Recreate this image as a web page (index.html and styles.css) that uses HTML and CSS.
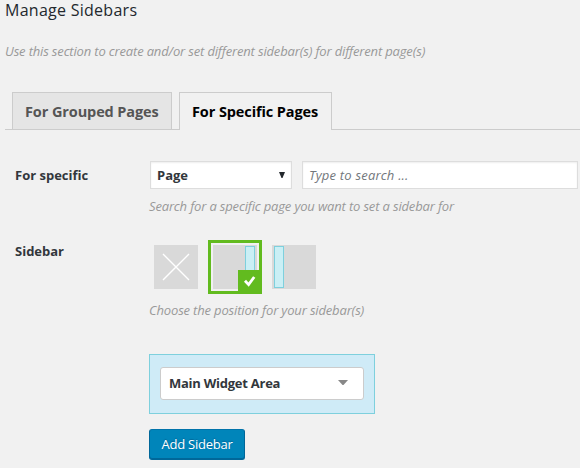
FILE: index.html
```html
<!DOCTYPE html>
<html lang="en">
<head>
  <meta charset="UTF-8">
  <meta name="viewport" content="width=device-width, initial-scale=1.0">
  <title>Manage Sidebars</title>
  <link rel="stylesheet" href="styles.css">
</head>
<body>
  <div class="wrap">
    <h2 class="title">Manage Sidebars</h2>
    <p class="intro">Use this section to create and/or set different sidebar(s) for different page(s)</p>

    <div class="tabs">
      <a class="tab tab-grouped">For Grouped Pages</a>
      <a class="tab tab-specific active">For Specific Pages</a>
    </div>

    <div class="row row-specific">
      <label class="label label-specific">For specific</label>
      <div class="field">
        <div class="inputs">
          <div class="select">
            <span>Page</span>
            <svg width="6" height="7" viewBox="0 0 6 7"><path d="M0 0h6L3.5 6h-1z" fill="#23282d"/></svg>
          </div>
          <div class="search">Type to search ...</div>
        </div>
        <p class="help help-search">Search for a specific page you want to set a sidebar for</p>
      </div>
    </div>

    <div class="row row-sidebar">
      <label class="label label-sidebar">Sidebar</label>
      <div class="field">
        <div class="positions">
          <div class="position">
            <svg width="44" height="44" viewBox="0 0 44 44"><path d="M9 9l26 26M35 9L9 35" stroke="#fff" stroke-width="1.4" fill="none"/></svg>
          </div>
          <div class="position right selected">
            <i class="bar"></i>
            <span class="check">
              <svg width="24" height="24" viewBox="0 0 24 24"><path d="M7 10.8l3.6 3.8L16.2 7" stroke="#fff" stroke-width="2.8" fill="none"/></svg>
            </span>
          </div>
          <div class="position left"><i class="bar"></i></div>
        </div>
        <p class="help help-position">Choose the position for your sidebar(s)</p>

        <div class="area">
          <div class="area-select">
            <span>Main Widget Area</span>
            <svg width="10" height="5" viewBox="0 0 10 5"><path d="M0 0h10L5.5 5h-1z" fill="#888"/></svg>
          </div>
        </div>

        <button class="button">Add Sidebar</button>
      </div>
    </div>
  </div>
</body>
</html>
```

FILE: styles.css
```css
* {
  box-sizing: border-box;
}

body {
  margin: 0;
  height: 468px;
  overflow: hidden;
  background: #f1f1f1;
  color: #32373c;
  font-family: "Open Sans", "Noto Sans", sans-serif;
  font-size: 13px;
  white-space: nowrap;
}

.wrap {
  padding-left: 5px;
}

.title {
  margin: 0;
  height: 20px;
  font-size: 16px;
  font-weight: 500;
  line-height: 20px;
  letter-spacing: 0.27px;
  color: #23282d;
}

.intro {
  margin: 21px 0 0;
  height: 21px;
  line-height: 20px;
  font-style: italic;
  letter-spacing: -0.16px;
  color: #999;
}

.tabs {
  display: flex;
  gap: 7px;
  height: 38px;
  margin-top: 30px;
  padding-left: 7px;
  border-bottom: 1px solid #ccc;
}

.tab {
  height: 37px;
  padding-left: 12px;
  border: 1px solid #ccc;
  border-bottom: none;
  background: #e5e5e5;
  color: #555;
  font-size: 14.5px;
  font-weight: 700;
  line-height: 37px;
  letter-spacing: -0.1px;
}

.tab-grouped {
  width: 160px;
}

.tab-specific {
  width: 153px;
}

.tab.active {
  height: 38px;
  background: #f1f1f1;
  color: #000;
}

.row {
  display: grid;
  grid-template-columns: 134px 1fr;
  padding-left: 10px;
}

.row-specific {
  margin-top: 31px;
}

.row-sidebar {
  margin-top: 24px;
}

.label {
  font-weight: 700;
  line-height: 28px;
}

.label-sidebar {
  line-height: 22px;
}

.inputs {
  display: flex;
  gap: 10px;
  padding-left: 1px;
}

.select,
.search {
  display: flex;
  align-items: center;
  height: 28px;
  border: 1px solid #ddd;
  background: #fff;
  box-shadow: inset 0 1px 2px rgba(0, 0, 0, 0.07);
}

.select {
  justify-content: space-between;
  width: 142px;
  padding: 0 6px;
  font-weight: 700;
}

.search {
  width: 276px;
  padding-left: 6px;
  font-style: italic;
  letter-spacing: 0.2px;
  color: #72777c;
}

.help {
  margin: 0;
  height: 20px;
  font-style: italic;
  line-height: 20px;
  letter-spacing: -0.16px;
  color: #999;
}

.help-search {
  margin-top: 7px;
}

.positions {
  display: flex;
  align-items: center;
  height: 54px;
}

.position {
  position: relative;
  width: 44px;
  height: 44px;
  margin-left: 5px;
  background: #d9d9d9;
}

.position.selected {
  margin: 0 10px 0 15px;
  outline: 3px solid #62bb1f;
  outline-offset: 2px;
}

.position svg {
  display: block;
}

.bar {
  position: absolute;
  top: 1px;
  width: 10px;
  height: 42px;
  border: 1px solid #7ed0dd;
  background: #caeff5;
}

.right .bar {
  right: 2px;
}

.left .bar {
  left: 2px;
}

.check {
  position: absolute;
  right: -5px;
  bottom: -5px;
  width: 24px;
  height: 24px;
  background: #62bb1f;
}

.help-position {
  margin-top: 6px;
}

.area {
  width: 226px;
  height: 60px;
  margin-top: 34px;
  padding: 12px 10px;
  border: 1px solid #7ed0dd;
  background: #cfebf7;
}

.area-select {
  display: flex;
  align-items: center;
  justify-content: space-between;
  height: 33px;
  padding: 0 15px 2px 8px;
  border: 1px solid #ccc;
  border-radius: 3px;
  background: #fff;
  font-weight: 700;
  letter-spacing: -0.25px;
}

.button {
  display: block;
  width: 96px;
  height: 31px;
  margin-top: 15px;
  padding: 0 0 2px;
  border: 1px solid #006799;
  border-color: #0073aa #006799 #006799;
  border-radius: 3px;
  background: #0085ba;
  box-shadow: inset 0 -1px 0 #006799;
  color: #fff;
  font-family: inherit;
  font-size: 13px;
  letter-spacing: -0.25px;
  text-shadow: 0 -1px 1px #006799;
}
```
